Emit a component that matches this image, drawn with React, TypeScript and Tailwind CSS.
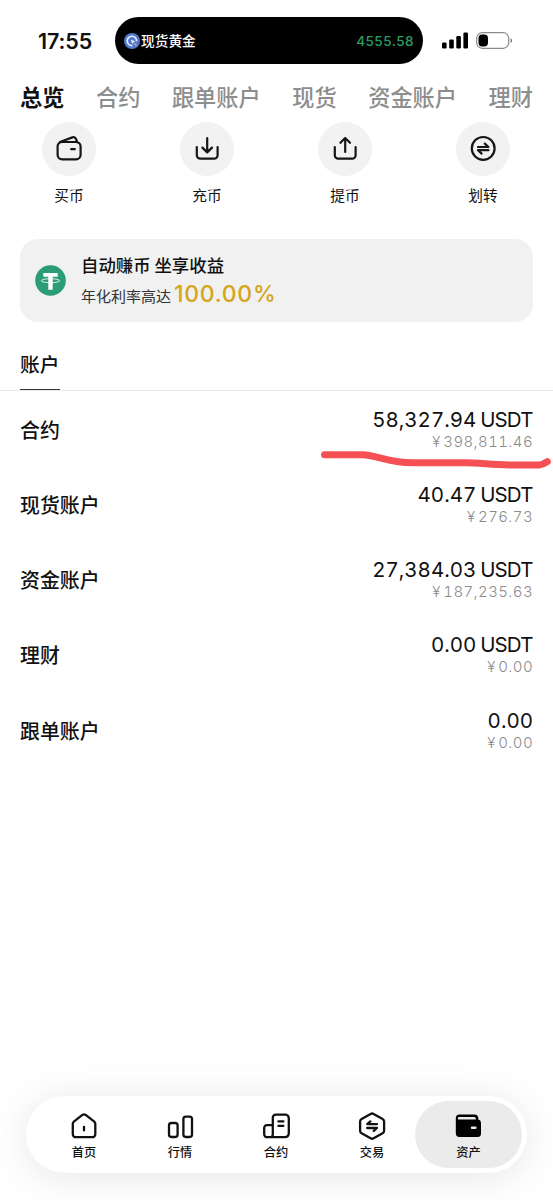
import type { ReactNode } from "react";

type Tab = {
  label: string;
  active?: boolean;
};

type Action = {
  label: string;
  icon: ReactNode;
};

type Account = {
  name: string;
  amount: string;
  unit?: string;
  fiat: string;
};

const tabs: Tab[] = [
  { label: "总览", active: true },
  { label: "合约" },
  { label: "跟单账户" },
  { label: "现货" },
  { label: "资金账户" },
  { label: "理财" },
];

const accounts: Account[] = [
  { name: "合约", amount: "58,327.94", unit: "USDT", fiat: "398,811.46" },
  { name: "现货账户", amount: "40.47", unit: "USDT", fiat: "276.73" },
  { name: "资金账户", amount: "27,384.03", unit: "USDT", fiat: "187,235.63" },
  { name: "理财", amount: "0.00", unit: "USDT", fiat: "0.00" },
  { name: "跟单账户", amount: "0.00", fiat: "0.00" },
];

const actionIconClasses =
  "h-[28px] w-[28px] fill-none stroke-[#161616] stroke-[2.2] [stroke-linecap:round] [stroke-linejoin:round]";

const navIconClasses =
  "h-[28px] w-[28px] fill-none stroke-[#111] stroke-[2.3] [stroke-linecap:round] [stroke-linejoin:round]";

const actions: Action[] = [
  {
    label: "买币",
    icon: (
      <svg viewBox="0 0 28 28" className={actionIconClasses}>
        <rect x="2.6" y="7" width="23" height="17.4" rx="4.6" />
        <path d="M5 7 L17.4 2.4 C19.2 1.8 20.4 2.6 21 4 L22.2 7.2" />
        <path d="M16.2 14.2h3.6" />
      </svg>
    ),
  },
  {
    label: "充币",
    icon: (
      <svg viewBox="0 0 28 28" className={actionIconClasses}>
        <path d="M3.8 12v8.2a3.5 3.5 0 0 0 3.5 3.5h13.8a3.5 3.5 0 0 0 3.5-3.5V12" />
        <path d="M14.2 3.2v13.8M9.4 12.6l4.8 4.8 4.8-4.8" />
      </svg>
    ),
  },
  {
    label: "提币",
    icon: (
      <svg viewBox="0 0 28 28" className={actionIconClasses}>
        <path d="M3.8 12v8.2a3.5 3.5 0 0 0 3.5 3.5h13.8a3.5 3.5 0 0 0 3.5-3.5V12" />
        <path d="M14.2 17V3.2M9.4 7.8l4.8-4.8 4.8 4.8" />
      </svg>
    ),
  },
  {
    label: "划转",
    icon: (
      <svg viewBox="0 0 28 28" className={actionIconClasses}>
        <circle cx="14.2" cy="13.4" r="11.4" />
        <path d="M9 12h10.4l-3.6-3.4M19.4 15.2H9l3.6 3.4" />
      </svg>
    ),
  },
];

const navItems: (Action & { active?: boolean })[] = [
  {
    label: "首页",
    icon: (
      <svg viewBox="0 0 28 28" className={navIconClasses}>
        <path d="M2.8 11.8c0-1 .5-1.9 1.3-2.5l8-6.2c1.2-.9 2.7-.9 3.9 0l8 6.2c.8.6 1.3 1.5 1.3 2.5v10.400a3 3 0 0 1-3 3H5.800a3 3 0 0 1-3-3z" />
        <path d="M14 14.8v3.6" />
      </svg>
    ),
  },
  {
    label: "行情",
    icon: (
      <svg viewBox="0 0 28 28" className={navIconClasses}>
        <rect x="3" y="11" width="8.6" height="14" rx="2.4" />
        <rect x="17.4" y="4.6" width="8.6" height="20.4" rx="2.4" />
      </svg>
    ),
  },
  {
    label: "合约",
    icon: (
      <svg viewBox="0 0 28 28" className={navIconClasses}>
        <path d="M10.8 22.5V5.6a3 3 0 0 1 3-3h9.4a3.6 3.6 0 0 1 3.6 3.6v15.400a3.600 3.600 0 0 1-3.600 3.600H5.200a3 3 0 0 1-3-3v-6.400a2.600 2.600 0 0 1 2.600-2.600h6M10.800 22a2.800 2.800 0 0 1-2.800 3.200" />
        <path d="M16.4 9.4h5M16.4 13.8h5" />
      </svg>
    ),
  },
  {
    label: "交易",
    icon: (
      <svg viewBox="0 0 28 28" className={navIconClasses}>
        <path d="M12.6 1.9a3 3 0 0 1 3 0l9 5a3 3 0 0 1 1.5 2.6v9.2a3 3 0 0 1-1.5 2.6l-9 5a3 3 0 0 1-3 0l-9-5a3 3 0 0 1-1.500-2.600V9.500a3 3 0 0 1 1.500-2.600z" />
        <path d="M19 12.100H9.200l3.200-2.700M9.200 16H19l-3.200 2.900" />
      </svg>
    ),
  },
  {
    label: "资产",
    active: true,
    icon: (
      <svg viewBox="0 0 28 28" className="-ml-[2px] h-[28px] w-[28px]">
        <path
          fillRule="evenodd"
          d="M5.500 2.500h15a3.800 3.800 0 0 1 3.800 3.800v1.300a3.300 3.300 0 0 1 2.700 3.200v10.700a3.500 3.500 0 0 1-3.500 3.500h-18A3.700 3.700 0 0 1 1.800 21.300V6.200a3.700 3.700 0 0 1 3.700-3.700zM5 5.100a1 1 0 0 0 0 2.400h16.800V6.600a1.500 1.500 0 0 0-1.500-1.500zM18 14.500a1.200 1.200 0 0 0 0 2.400h3.400a1.200 1.200 0 0 0 0-2.400z"
        />
      </svg>
    ),
  },
];

function StatusBar() {
  return (
    <header className="mt-[17px] flex h-[47px] items-center">
      <div className="ml-[38px] w-[77px] pt-[1px] font-[Inter] text-[21.5px] font-semibold tracking-[-0.1px]">17:55</div>
      <div className="flex h-[47px] w-[308px] items-center rounded-full bg-black pr-[9px] pl-[9px] text-[13.7px] font-medium text-white">
        <svg viewBox="0 0 16 16" className="h-4 w-4 shrink-0">
          <circle cx="8" cy="8" r="8" fill="#5279d0" />
          <path d="M8.4 12.6A4.7 4.7 0 1 1 12.6 8.3" fill="none" stroke="#e9f0ff" strokeWidth="1.6" />
          <path d="M6.8 6.7l4.5 1.5-1.8 1-1 1.8z" fill="#e9f0ff" />
          <path d="M10.5 10.5l2 2" stroke="#c9b58c" strokeWidth="1.2" />
        </svg>
        <span className="ml-[1px]">现货黄金</span>
        <span className="ml-auto pt-[1px] font-[Inter] text-[13.5px] tracking-[0.5px] text-[#2c9c63]">4555.58</span>
      </div>
      <svg viewBox="0 0 72 18" className="ml-[19px] h-[18px] w-[72px]">
        <rect x="0" y="10.5" width="4.6" height="6" rx="1.2" />
        <rect x="7.2" y="7.5" width="4.6" height="9" rx="1.2" />
        <rect x="14.3" y="4" width="4.6" height="12.5" rx="1.2" />
        <rect x="21.4" y="0.5" width="4.6" height="16" rx="1.2" />
        <rect x="34.7" y="0.7" width="32" height="15.6" rx="5.5" fill="none" stroke="#8b8b8b" strokeWidth="1.2" />
        <rect x="36.5" y="2.6" width="9.5" height="11.8" rx="3.6" />
        <path d="M68.6 6.2c2 .8 2 3.8 0 4.6z" fill="#777" />
      </svg>
    </header>
  );
}

function EarnBanner() {
  return (
    <section className="mx-5 mt-[33px] flex h-[83px] items-center rounded-[18px] bg-[#f1f1f1] pl-[15px]">
      <svg viewBox="0 0 31 31" className="h-[31px] w-[31px]">
        <circle cx="15.5" cy="15.5" r="15.3" fill="#2a9d78" />
        <path d="M8.3 8h14.4v3.8h-5v12.9h-4.4V11.8h-5z" fill="#fff" />
        <ellipse cx="15.5" cy="15.7" rx="9.2" ry="2" fill="none" stroke="#fff" strokeWidth="0.8" />
      </svg>
      <div className="ml-[15px]">
        <p className="-mt-[1px] mb-[1px] text-[17.4px] leading-[26px] font-medium text-[#111]">自动赚币 坐享收益</p>
        <p className="flex h-[30px] items-baseline text-[15px] leading-[30px] text-[#333]">
          年化利率高达
          <span className="ml-[3px] font-[Inter] text-[23px] font-medium tracking-[0.7px] text-[#d6a520]">100.00%</span>
        </p>
      </div>
    </section>
  );
}

function AccountRow({ name, amount, unit, fiat }: Account) {
  return (
    <li className="flex h-[75.25px] items-center justify-between">
      <span className="text-[19.9px] font-medium">{name}</span>
      <div className="text-right font-[Inter] tabular-nums">
        <p className="flex items-baseline justify-end gap-1 text-[20.5px] leading-6">
          <span>{amount}</span>
          {unit && <span className="mr-[0.5px] tracking-[-0.9px]">{unit}</span>}
        </p>
        <p className="flex justify-end gap-[3px] text-[15px] leading-5 font-light text-[#8c8c8c]">
          <span>¥</span>
          <span className="tracking-[0.4px]">{fiat}</span>
        </p>
      </div>
    </li>
  );
}

function BottomNav() {
  return (
    <nav className="mx-[26px] mb-[27px] flex h-[77px] items-center rounded-full bg-white pl-[10px] shadow-[0_4px_42px_rgba(0,0,0,0.10)]">
      {navItems.map((item) => (
        <div
          key={item.label}
          className={
            item.active
              ? "-ml-[5px] flex h-[67px] w-[107px] shrink-0 flex-col items-center rounded-full bg-[#ebebeb] pt-[11px]"
              : "flex h-[67px] w-[96px] shrink-0 flex-col items-center pt-[11px]"
          }
        >
          {item.icon}
          <span className="mt-[3px] text-[12.2px] leading-[18px] font-medium">{item.label}</span>
        </div>
      ))}
    </nav>
  );
}

export default function App() {
  return (
    <div className="flex h-[1200px] w-[553px] flex-col overflow-hidden bg-white font-['Noto_Sans_CJK_SC',sans-serif] text-[#111]">
      <StatusBar />
      <div className="mx-5 mt-[16px] flex h-[34px] items-center justify-between text-[22.2px] font-medium whitespace-nowrap text-[#8d8d8d]">
        {tabs.map((tab) => (
          <span key={tab.label} className={tab.active ? "font-bold text-[#111]" : ""}>
            {tab.label}
          </span>
        ))}
      </div>
      <div className="mt-[8px] flex">
        {actions.map((action) => (
          <div key={action.label} className="flex w-[138px] shrink-0 flex-col items-center">
            <div className="flex h-[54px] w-[54px] items-center justify-center rounded-full bg-[#f2f2f2]">
              {action.icon}
            </div>
            <span className="mt-[8px] text-[14.7px] leading-[22px]">{action.label}</span>
          </div>
        ))}
      </div>
      <EarnBanner />
      <div className="mt-[24px] h-[45px] border-b border-[#e9e9e9] pl-5">
        <h2 className="h-[44px] w-[40px] border-b border-[#333] text-[19.7px] leading-[35px] font-medium">账户</h2>
      </div>
      <div className="relative">
        <ul className="px-5 pt-[1px]">
          {accounts.map((account) => (
            <AccountRow key={account.name} {...account} />
          ))}
        </ul>
        <svg
          viewBox="0 0 233 24"
          className="absolute top-[56px] left-[320px] h-6 w-[233px] fill-none stroke-[#f55053] stroke-[7] [stroke-linecap:round] [stroke-linejoin:round]"
        >
          <path d="M4.5 7.8H42C58 8.6 70 15.6 92 15.8h53c16 .2 30 2.3 52 2.3h22q4-.5 8.3-3.5" />
        </svg>
      </div>
      <div className="mt-auto">
        <BottomNav />
      </div>
    </div>
  );
}
